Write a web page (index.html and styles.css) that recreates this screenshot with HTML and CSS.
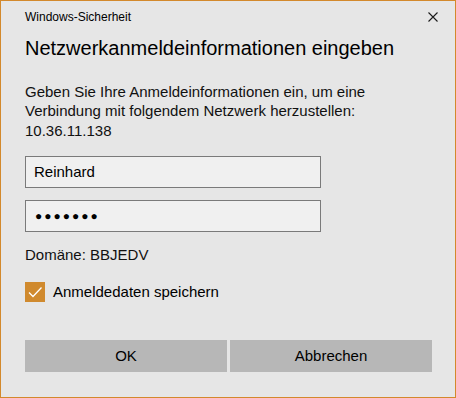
FILE: index.html
```html
<!DOCTYPE html>
<html lang="de">
<head>
<meta charset="utf-8">
<title>Windows-Sicherheit</title>
<link rel="stylesheet" href="styles.css">
</head>
<body>
<div class="window">
  <div class="titlebar">
    <span class="title">Windows-Sicherheit</span>
    <svg class="close" width="10" height="10" viewBox="0 0 10 10"><path d="M0.5 0.5 L9.5 9.5 M9.5 0.5 L0.5 9.5" stroke="#1a1a1a" stroke-width="1.1" fill="none"/></svg>
  </div>
  <h1 class="heading">Netzwerkanmeldeinformationen eingeben</h1>
  <p class="message">Geben Sie Ihre Anmeldeinformationen ein, um eine<br>Verbindung mit folgendem Netzwerk herzustellen:<br>10.36.11.138</p>
  <div class="fields">
    <div class="field">Reinhard</div>
    <div class="field password">●●●●●●●</div>
  </div>
  <div class="domain">Domäne: BBJEDV</div>
  <div class="check-row">
    <span class="checkbox"><svg width="20" height="20" viewBox="0 0 20 20"><path d="M4 10.5 L8 14.5 L16.5 5.5" stroke="#fff" stroke-width="1.3" fill="none"/></svg></span>
    <span class="check-label">Anmeldedaten speichern</span>
  </div>
  <div class="buttons">
    <div class="btn">OK</div>
    <div class="btn">Abbrechen</div>
  </div>
</div>
</body>
</html>
```
FILE: styles.css
```css
html, body { margin: 0; padding: 0; }
body { background: #e6e6e6; font-family: "Liberation Sans", Arial, sans-serif; color: #000; }
.window {
  width: 456px; height: 398px; box-sizing: border-box;
  border: 1px solid #d3892c; background: #e6e6e6;
  padding: 0 23px 0 24px;
  display: flex; flex-direction: column;
}
.titlebar {
  display: flex; justify-content: space-between; align-items: flex-start;
  padding-top: 8px; height: 16px;
}
.title { font-size: 12px; line-height: 16px; color: #000; }
.close { margin-top: 3px; margin-right: -6px; }
.heading { margin: 9px 0 0 0; font-size: 20px; line-height: 28px; font-weight: normal; color: #000; }
.message { margin: 19.5px 0 0 0; font-size: 15px; line-height: 19.5px; color: #111; }
.fields { margin-top: 16px; display: flex; flex-direction: column; gap: 12px; }
.field {
  width: 296px; height: 32px; box-sizing: border-box;
  border: 1px solid #7a7a7a; background: #f0f0f0;
  padding: 0 8px; font-size: 15px; line-height: 30px; color: #000;
}
.password { font-size: 12px; letter-spacing: 2px; padding-left: 9px; }
.domain { margin-top: 12.5px; font-size: 15px; line-height: 20px; color: #111; }
.check-row { margin-top: 17.5px; display: flex; align-items: center; gap: 8px; height: 20px; }
.checkbox { width: 20px; height: 20px; background: #d08a2e; display: block; }
.checkbox svg { display: block; }
.check-label { font-size: 15px; line-height: 20px; color: #000; }
.buttons { margin-top: 38px; display: flex; gap: 3px; }
.btn {
  width: 202px; height: 32px; background: #b7b7b7;
  font-size: 15px; line-height: 32px; text-align: center; color: #000;
}
```
